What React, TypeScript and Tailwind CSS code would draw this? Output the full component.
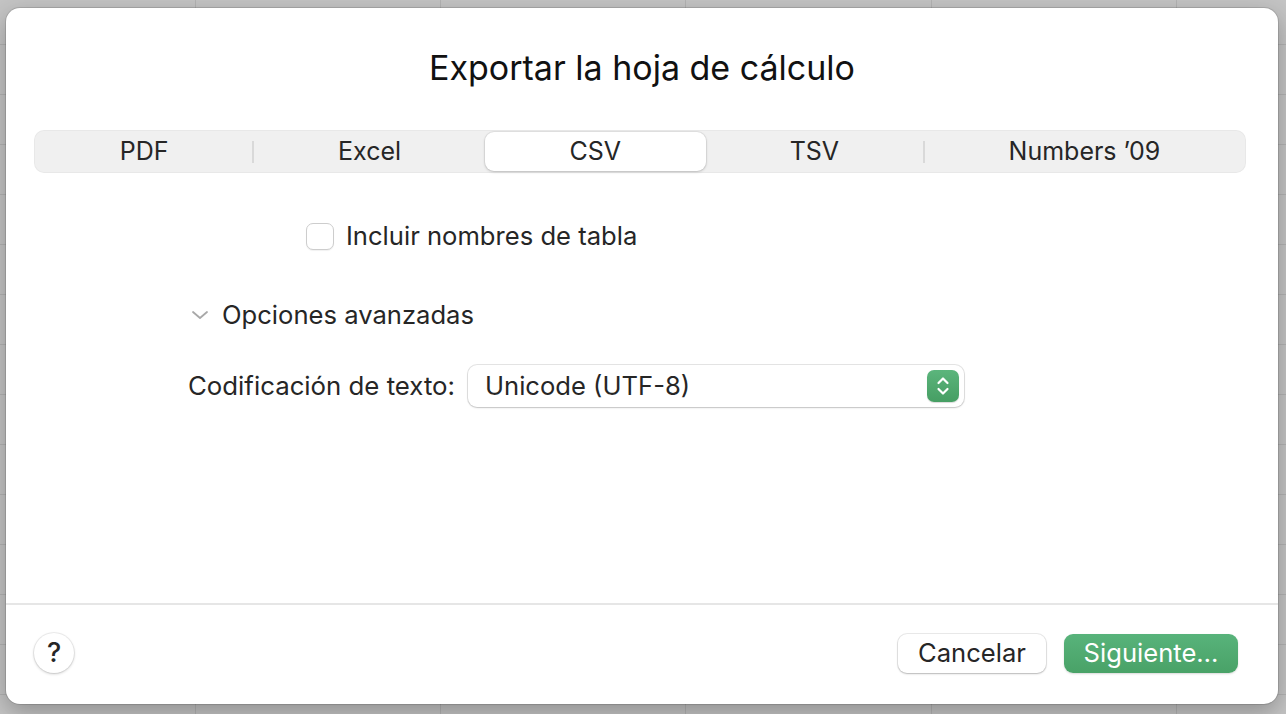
const tabs = ['PDF', 'Excel', 'CSV', 'TSV', 'Numbers ’09']
const SELECTED = 2

const cols = [196, 245, 245, 246, 245, 109]

function SheetBackdrop() {
  return (
    <div className="flex h-full w-full flex-col bg-[#c4c4c4]">
      {Array.from({ length: 15 }).map((_, r) => (
        <div key={r} className="flex h-[50px] shrink-0 border-b border-[#b3b3b3] first:h-[45px]">
          {cols.map((w, c) => (
            <div
              key={c}
              className="h-full shrink-0 border-r border-[#b3b3b3] last:border-r-0"
              style={{ width: w }}
            />
          ))}
        </div>
      ))}
    </div>
  )
}

function Stepper() {
  return (
    <div className="flex h-[32px] w-[32px] items-center justify-center rounded-[7px] bg-gradient-to-b from-[#5bb57c] to-[#469e63] shadow-[0_1px_1px_rgba(0,0,0,0.15)]">
      <svg width="16" height="24" viewBox="0 0 16 24" fill="none">
        <path d="M3.5 9 L8 4.5 L12.5 9" stroke="white" strokeWidth="2.2" strokeLinecap="round" strokeLinejoin="round" />
        <path d="M3.5 15 L8 19.5 L12.5 15" stroke="white" strokeWidth="2.2" strokeLinecap="round" strokeLinejoin="round" />
      </svg>
    </div>
  )
}

function Disclosure() {
  return (
    <svg width="18" height="12" viewBox="0 0 18 12" fill="none">
      <path d="M2 3 L9 9 L16 3" stroke="#a8a8a8" strokeWidth="1.8" strokeLinecap="round" strokeLinejoin="round" />
    </svg>
  )
}

export default function App() {
  return (
    <div
      className="relative h-[714px] w-[1286px] overflow-hidden text-[#262626]"
      style={{ fontFamily: 'Inter, "Noto Sans", "Liberation Sans", sans-serif' }}
    >
      <SheetBackdrop />

      <div className="absolute left-[6px] top-[8px] flex h-[696px] w-[1272px] flex-col rounded-[14px] bg-white shadow-[0_0_0_1px_rgba(0,0,0,0.12),0_8px_24px_rgba(0,0,0,0.28)]">
        <h1 className="mt-[40px] h-[40px] text-center text-[34px] leading-[40px] font-normal text-[#111]">
          Exportar la hoja de cálculo
        </h1>

        <div className="ml-[28px] mr-[32px] mt-[42px] flex h-[43px] items-center rounded-[10px] bg-[#f0f0f0] px-[2px] shadow-[inset_0_0_0_1px_rgba(0,0,0,0.03)]">
          {tabs.map((t, i) => {
            const selected = i === SELECTED
            const showSep = i > 0 && i !== SELECTED && i !== SELECTED + 1
            return (
              <div key={t} className="relative flex h-[39px] flex-auto items-center">
                {showSep ? <div className="h-[22px] w-[2px] shrink-0 bg-[#d9d9d9]" /> : null}
                <div
                  className={
                    selected
                      ? 'flex h-full flex-auto items-center justify-center rounded-[9px] bg-white px-[84px] text-[25px] shadow-[0_0_0_1px_rgba(0,0,0,0.05),0_1px_3px_rgba(0,0,0,0.18)]'
                      : 'flex h-full flex-auto items-center justify-center px-[83px] text-[25px]'
                  }
                >
                  <span className="whitespace-nowrap">{t}</span>
                </div>
              </div>
            )
          })}
        </div>

        <div className="ml-[300px] mt-[49px] flex h-[28px] items-center gap-[12px]">
          <div className="h-[27px] w-[28px] rounded-[7px] border border-[#cdcdcd] bg-white shadow-[0_1px_1px_rgba(0,0,0,0.06)]" />
          <span className="text-[25.6px]">Incluir nombres de tabla</span>
        </div>

        <div className="ml-[185px] mt-[51px] flex h-[28px] items-center gap-[13px]">
          <Disclosure />
          <span className="text-[25.6px]">Opciones avanzadas</span>
        </div>

        <div className="ml-[182px] mt-[36px] flex h-[42px] items-center gap-[13px]">
          <span className="text-[25.8px]">Codificación de texto:</span>
          <div className="flex h-[42px] w-[496px] items-center justify-between rounded-[9px] bg-white pl-[17px] pr-[5px] shadow-[0_0_0_1px_rgba(0,0,0,0.1),0_1px_2px_rgba(0,0,0,0.15)]">
            <span className="text-[25.6px]">Unicode (UTF-8)</span>
            <Stepper />
          </div>
        </div>

        <div className="flex-1" />
        <div className="h-[2px] bg-[#e6e6e6]" />

        <div className="flex h-[99px] items-center pb-[3px] pl-[28px] pr-[40px]">
          <button className="flex h-[40px] w-[40px] items-center justify-center rounded-full bg-white text-[27px] font-medium shadow-[0_0_0_1px_rgba(0,0,0,0.06),0_1px_3px_rgba(0,0,0,0.2)]">
            ?
          </button>
          <div className="flex-1" />
          <button className="h-[39px] w-[148px] rounded-[9px] bg-white text-[25.6px] shadow-[0_0_0_1px_rgba(0,0,0,0.08),0_1px_2px_rgba(0,0,0,0.22)]">
            Cancelar
          </button>
          <button className="ml-[18px] h-[39px] w-[174px] rounded-[9px] bg-gradient-to-b from-[#58b37b] to-[#49a267] text-[25.6px] text-white shadow-[0_1px_2px_rgba(0,0,0,0.15)]">
            Siguiente…
          </button>
        </div>
      </div>
    </div>
  )
}
